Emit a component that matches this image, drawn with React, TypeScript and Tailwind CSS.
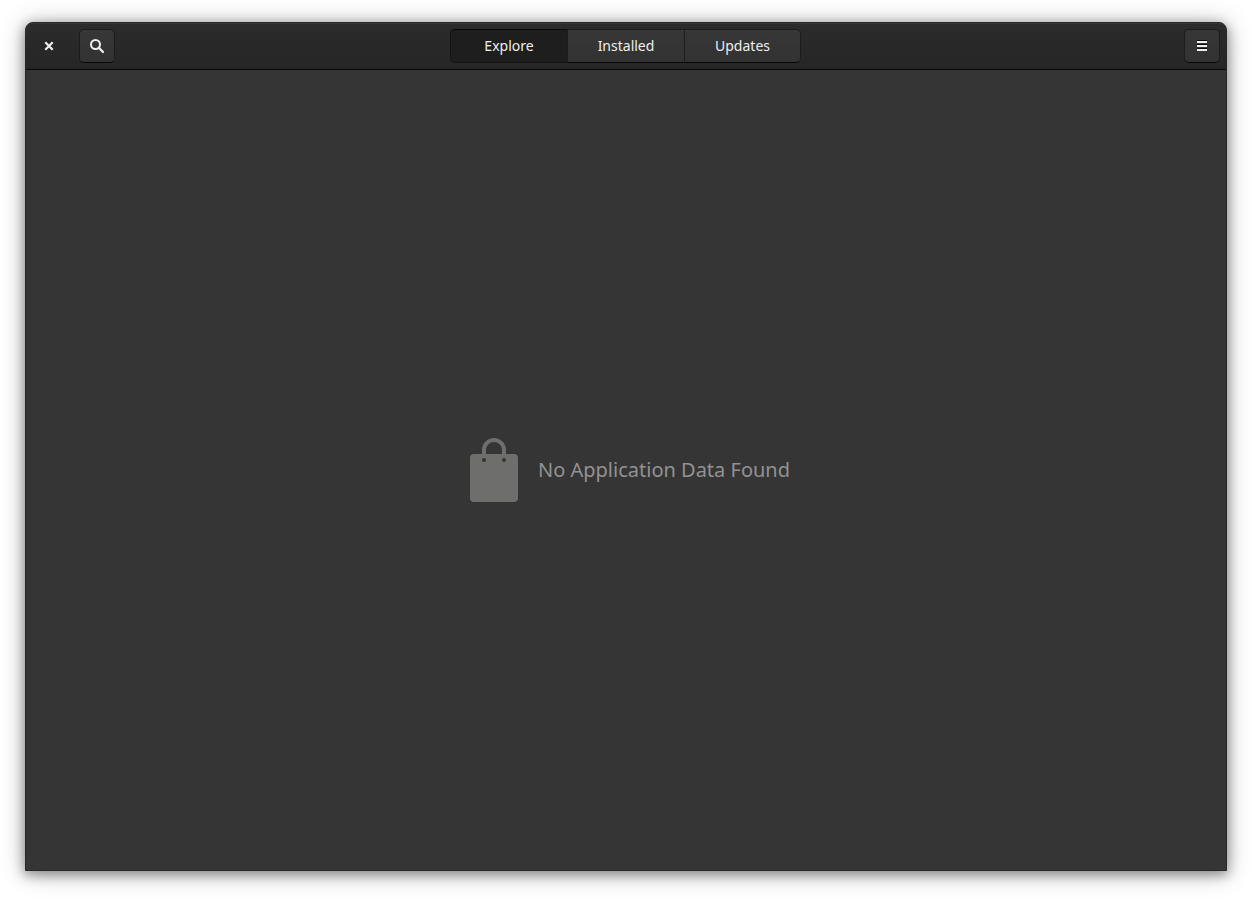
import { useState } from "react";

const tabs = ["Explore", "Installed", "Updates"];

const raised =
  "bg-linear-to-b from-[#373737] to-[#323232] border border-[#1c1c1c] border-b-[#070707] hover:from-[#3c3c3c] hover:to-[#363636]";

function CloseIcon() {
  return (
    <svg viewBox="0 0 16 16" className="size-4" aria-hidden="true">
      <path d="M4.3 4.3 11.7 11.7M11.7 4.3 4.3 11.7" stroke="#eeeeec" strokeWidth="2.2" fill="none" />
    </svg>
  );
}

function SearchIcon() {
  return (
    <svg viewBox="0 0 16 16" className="size-4" aria-hidden="true">
      <circle cx="6.5" cy="6.5" r="4.5" stroke="#eeeeec" strokeWidth="2" fill="none" />
      <path d="M9.8 9.8 14 14" stroke="#eeeeec" strokeWidth="2.3" strokeLinecap="round" />
    </svg>
  );
}

function MenuIcon() {
  return (
    <svg viewBox="0 0 16 16" className="size-4" aria-hidden="true">
      <path d="M3 2h10v1H3zM3 6h10v1H3zM3 10h10v1H3z" fill="#0c0c0c" />
      <path d="M3 3h10v2H3zM3 7h10v2H3zM3 11h10v2H3z" fill="#eeeeec" />
    </svg>
  );
}

function BagIcon() {
  return (
    <svg viewBox="0 0 64 64" className="size-16 shrink-0" aria-hidden="true">
      <path
        fill="#6e6e6c"
        fillRule="evenodd"
        d="M12 16h8v-4a12 12 0 0 1 24 0v4h8a4 4 0 0 1 4 4v40a4 4 0 0 1-4 4H12a4 4 0 0 1-4-4V20a4 4 0 0 1 4-4ZM24 16h16v-4a8 8 0 0 0-16 0ZM20 22a2 2 0 1 0 4 0a2 2 0 1 0-4 0ZM40 22a2 2 0 1 0 4 0a2 2 0 1 0-4 0Z"
      />
    </svg>
  );
}

export default function App() {
  const [active, setActive] = useState("Explore");

  return (
    <div className="flex h-screen bg-white px-[25px] pt-[22px] pb-7 font-['Noto_Sans',sans-serif] text-[#eeeeec]">
      <div className="flex flex-1 flex-col overflow-hidden rounded-t-lg border border-[#292929] bg-[#353535] shadow-[0_3px_12px_1px_rgba(0,0,0,0.36),0_2px_26px_rgba(0,0,0,0.26)]">
        <header className="grid grid-cols-[1fr_auto_1fr] items-center border-t border-b border-t-[#363636] border-b-[#070707] bg-linear-to-b from-[#2b2b2b] to-[#262626] pr-1.5 pl-[5px] pt-[5px] pb-1.5">
          <div className="flex items-center gap-3">
            <button type="button" aria-label="Close" className="flex h-[34px] w-9 items-center justify-center rounded-[5px]">
              <CloseIcon />
            </button>
            <button type="button" aria-label="Search" className={"flex h-[34px] w-9 items-center justify-center rounded-[5px] " + raised}>
              <SearchIcon />
            </button>
          </div>
          <nav className="flex" aria-label="Views">
            {tabs.map((tab) => (
              <button
                key={tab}
                type="button"
                aria-pressed={active === tab}
                onClick={() => setActive(tab)}
                className={
                  "-ml-px h-[34px] w-[118px] text-sm first:ml-0 first:rounded-l-[5px] last:w-[117px] last:rounded-r-[5px] " +
                  (active === tab ? "border border-[#141414] border-t-[#070707] bg-[#1e1e1e]" : raised)
                }
              >
                {tab}
              </button>
            ))}
          </nav>
          <div className="flex justify-end">
            <button type="button" aria-label="Menu" className={"flex h-[34px] w-9 items-center justify-center rounded-[5px] " + raised}>
              <MenuIcon />
            </button>
          </div>
        </header>
        <main className="flex flex-1 items-center justify-center gap-3">
          <BagIcon />
          <h1 className="text-xl text-[#929291]">No Application Data Found</h1>
        </main>
      </div>
    </div>
  );
}
